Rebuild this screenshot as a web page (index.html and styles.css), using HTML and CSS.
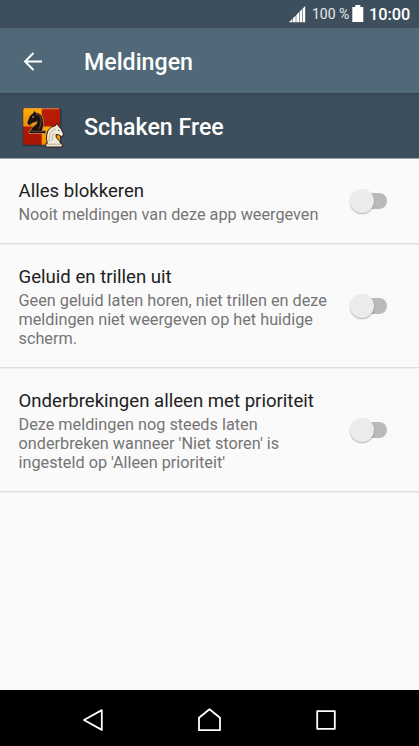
FILE: index.html
```html
<!DOCTYPE html>
<html lang="nl">
<head>
<meta charset="utf-8">
<title>Meldingen</title>
<link rel="stylesheet" href="styles.css">
</head>
<body>
<div class="status">
  <svg class="signal" width="17" height="17" viewBox="0 0 17 17" fill="#fff"><path d="M0 16.200 3.200 13v3.200zM3.800 12.400 6.700 9.500v6.700H3.800zM7.300 8.900 10.100 6.100v10.100H7.300zM10.700 5.500 13.100 3.100v13.100h-2.400zM13.700 2.500 16.200 0v16.200h-2.500z"/></svg>
  <span class="percent">100 %</span>
  <svg class="battery" width="12" height="18" viewBox="0 0 12 18" fill="#fff"><path d="M3.300 0h5v2H11.300v15H.3V2h3z"/></svg>
  <span class="clock">10:00</span>
</div>
<header class="bar">
  <svg class="back" width="20" height="20" viewBox="0 0 20 20" fill="none" stroke="#fff" stroke-width="2"><path d="M19 9.500H2M10.500 1 2 9.500l8.500 8.500"/></svg>
  <h1 class="heading">Meldingen</h1>
</header>
<div class="app">
  <svg class="logo" width="44" height="44" viewBox="0 0 44 44">
    <defs>
      <linearGradient id="red" x2="0" y2="1"><stop stop-color="#b91d06"/><stop offset="1" stop-color="#a81503"/></linearGradient>
      <linearGradient id="gold" x2="0" y2="1"><stop stop-color="#ffb000"/><stop offset="1" stop-color="#f58a00"/></linearGradient>
    </defs>
    <rect x="1.500" y="3.500" width="39" height="38" rx="2" fill="#172b38" opacity=".6"/>
    <rect x="2.300" y="3.300" width="36.700" height="36.500" rx="1.500" fill="url(#red)"/>
    <path d="M3.800 3.300H20.700V21.600H2.300V4.800Q2.300 3.300 3.800 3.300z" fill="url(#gold)"/>
    <path d="M20.700 21.600H39V38.300Q39 39.800 37.500 39.800H20.700z" fill="url(#gold)"/>
    <path d="M3.500 3.800H38" stroke="#f09a55" stroke-width=".8"/>
    <path d="M9.500 25.500q0-2.500 3.500-4.500 3-2 3-4.500-2 1.500-4.500 1.500l-2.500 2.500-2.500-1-.5-2 2.500-6.500 3.500-3 1-2.500 2 2q5 .5 7 6 1.800 6-.7 12h2.500q1 0 1 1v2H8v-2q0-1 1.500-1z" fill="#20130f" stroke="#d9a557" stroke-width=".7" stroke-linejoin="round"/>
    <path d="M15 8.800q5.200 1.700 5.200 7.200 0 4-2.200 8M9.500 26.300h13" fill="none" stroke="#75594c" stroke-width=".8"/>
    <circle cx="12" cy="12" r=".7" fill="#eee"/>
    <path d="M26.300 38.300q-2-8 1-13 2.500-4 7-4.500l2-2.500 1.200 3 2.500 2.500 2.500 5-.5 2-2 .8-2.300-1.800-2.700-.3q-.5 3 2 5 2 1.700 2.500 3.800l1.700.4v3.300H24.800v-3.300z" fill="#f1ead8" stroke="#2c1810" stroke-width="1" stroke-linejoin="round"/>
    <path d="M28.500 37q-1.300-7 2-10.500 2-2 4.500-2.500M26 39.200h14.500M31 36q-.5-5 2-8" fill="none" stroke="#a39376" stroke-width=".7"/>
    <circle cx="37.800" cy="25.300" r=".6" fill="#2c1810"/>
  </svg>
  <h2 class="heading">Schaken Free</h2>
</div>
<main class="list">
  <section class="row">
    <div class="copy">
      <h3 class="label">Alles blokkeren</h3>
      <p class="desc">Nooit meldingen van deze app weergeven</p>
    </div>
    <div class="switch"><span class="thumb"></span></div>
  </section>
  <section class="row">
    <div class="copy">
      <h3 class="label">Geluid en trillen uit</h3>
      <p class="desc">Geen geluid laten horen, niet trillen en deze<br>meldingen niet weergeven op het huidige<br>scherm.</p>
    </div>
    <div class="switch"><span class="thumb"></span></div>
  </section>
  <section class="row">
    <div class="copy">
      <h3 class="label">Onderbrekingen alleen met prioriteit</h3>
      <p class="desc">Deze meldingen nog steeds laten<br>onderbreken wanneer 'Niet storen' is<br>ingesteld op 'Alleen prioriteit'</p>
    </div>
    <div class="switch"><span class="thumb"></span></div>
  </section>
</main>
<nav class="nav">
  <svg width="24" height="24" viewBox="0 0 24 24"><path d="M3 12 20.800 2.100v19.800z"/></svg>
  <svg width="24" height="24" viewBox="0 0 24 24"><path d="M11.500 1.200 22 9.700V22.200H1V9.700z"/></svg>
  <svg width="24" height="24" viewBox="0 0 24 24"><path d="M3.200 3.200h17.600v17.600H3.200z"/></svg>
</nav>
</body>
</html>
```
FILE: styles.css
```css
* { box-sizing: border-box; margin: 0; padding: 0; }
body {
  display: flex;
  flex-direction: column;
  width: 419px;
  height: 746px;
  overflow: hidden;
  background: #fafafa;
  font-family: Roboto, sans-serif;
}
svg { display: block; flex: none; }
.status {
  display: flex;
  justify-content: flex-end;
  height: 28px;
  padding: 0 9px 0 0;
  background: #3d4f5d;
  color: #fff;
  line-height: 29px;
  white-space: nowrap;
}
.signal { margin: 6px 6px 0 0; }
.percent { width: 37px; font-size: 14px; color: #e6eaec; }
.battery { margin: 5px 5px 0 3px; }
.clock { width: 42px; margin-right: -1px; font-size: 16.300px; font-weight: 500; }
.bar, .app {
  display: flex;
  align-items: center;
  color: #fff;
}
.bar { height: 65px; background: #516878; padding: 2px 0 0 23px; }
.back { margin: 0 41px 0 0; }
.heading { font-size: 23.200px; font-weight: 500; line-height: 28px; }
.app {
  height: 66px;
  background: linear-gradient(#334550, #3d4f5d 4px);
  border-bottom: 1px solid #9aa4ab;
  padding: 2px 0 0 21px;
}
.app .heading { padding-top: 1px; }
.logo { margin-right: 19px; }
.list { flex: 1; }
.row {
  display: flex;
  align-items: center;
  justify-content: space-between;
  padding: 21px 32px 19px 18.500px;
  border-bottom: 1px solid #dedede;
  box-shadow: 0 1px #f0f0f0;
}
.row:first-child { padding-top: 20px; }
.label {
  color: #212121;
  font-size: 18.600px;
  font-weight: 400;
  line-height: 24px;
  white-space: nowrap;
}
.desc {
  margin-top: 2px;
  color: #757575;
  font-size: 16.250px;
  line-height: 19px;
  white-space: nowrap;
}
.switch {
  display: flex;
  align-items: center;
  width: 32px;
  height: 16px;
  margin-bottom: 2px;
  border-radius: 8px;
  background: #b9b9b9;
}
.thumb {
  flex: none;
  width: 24px;
  height: 24px;
  margin-left: -5px;
  border-radius: 50%;
  background: #ececec;
  box-shadow: 0 1px 1.500px rgba(0, 0, 0, .3);
}
.nav {
  display: flex;
  justify-content: space-between;
  align-items: center;
  height: 56px;
  padding: 3px 81px 0;
  background: #000;
}
.nav path { fill: none; stroke: #fff; stroke-width: 1.800; stroke-linejoin: round; }
```
